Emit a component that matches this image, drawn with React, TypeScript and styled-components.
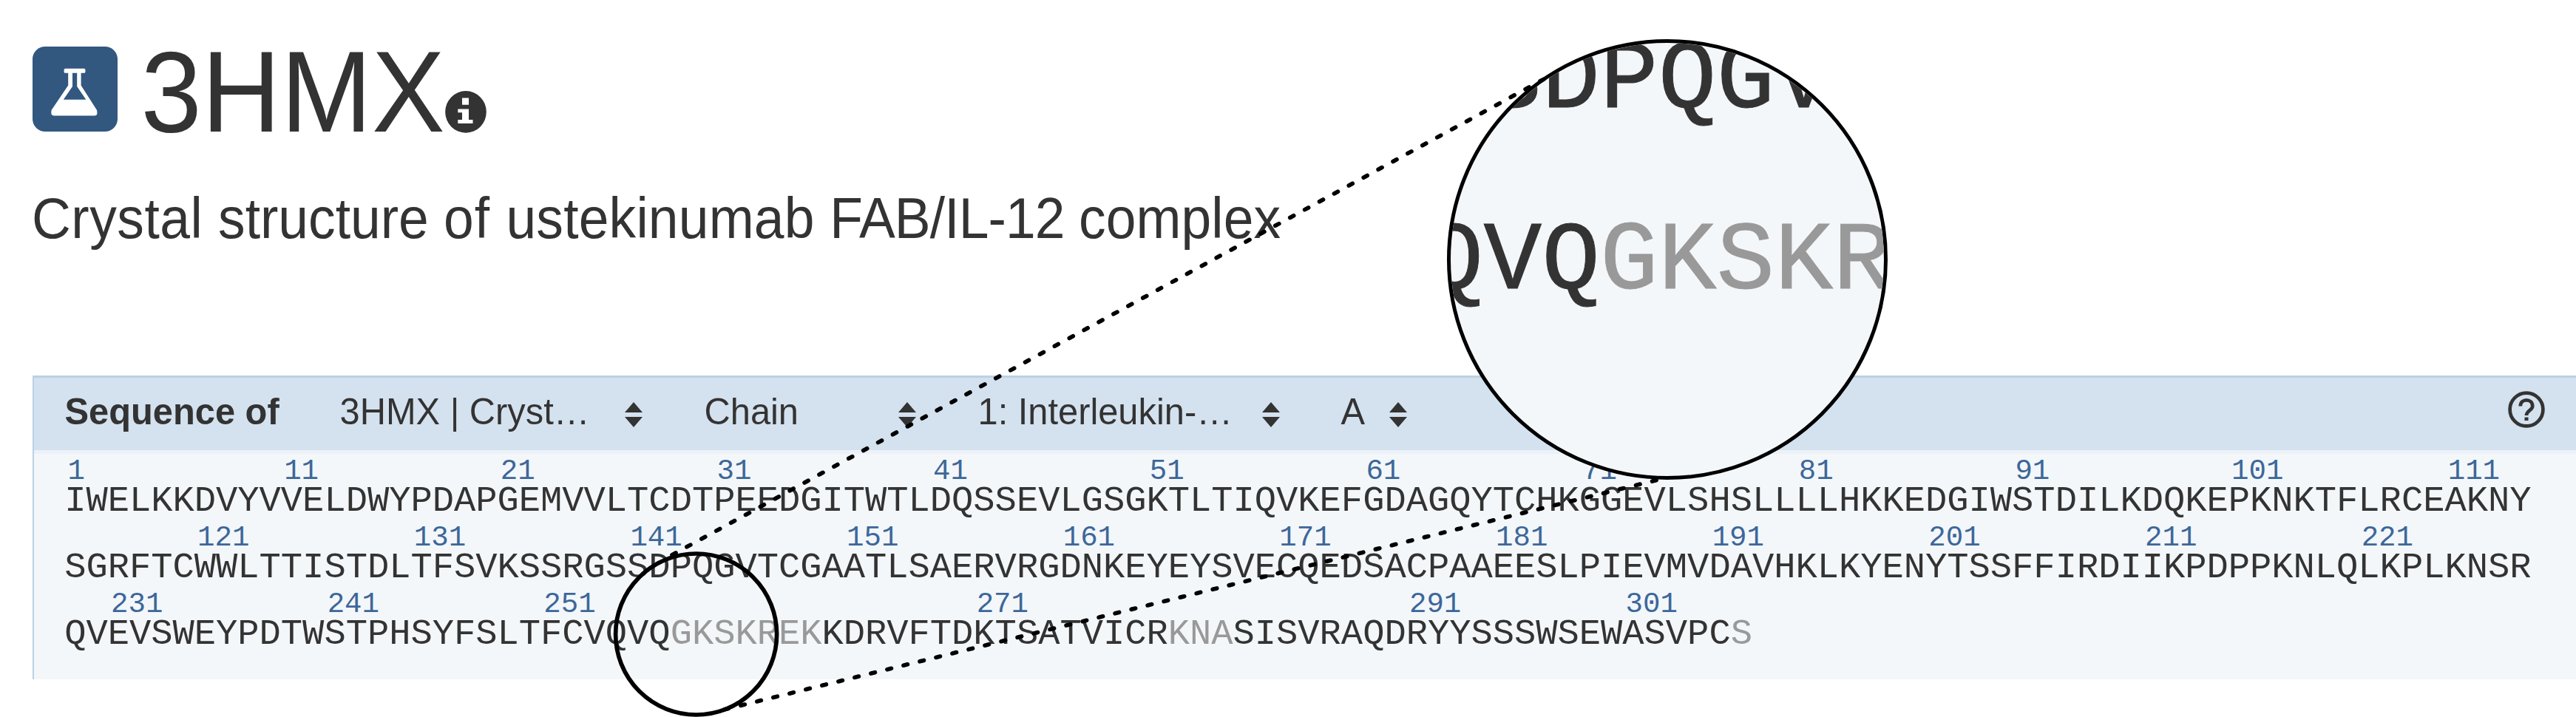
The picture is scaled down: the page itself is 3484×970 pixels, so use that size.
import React from "react";
import styled, { createGlobalStyle } from "styled-components";

const GlobalStyle = createGlobalStyle`
  * { box-sizing: border-box; }
  html, body { margin: 0; padding: 0; background: #fff; }
`;

const Page = styled.main`
  position: relative;
  width: 3484px;
  height: 970px;
  overflow: hidden;
  background: #fff;
  color: #333;
  font-family: "Liberation Sans", Arial, sans-serif;
`;

const TitleRow = styled.header`
  display: flex;
  align-items: flex-start;
  height: 254px;
  padding: 62.5px 0 0 43.5px;
`;

const EntryBadge = styled.span`
  display: flex;
  width: 115px;
  height: 115px;
  border-radius: 17px;
  background: #325880;
`;

const EntryId = styled.h1`
  margin: -17px 0 0 32px;
  font-size: 148px;
  line-height: 162px;
  font-weight: 400;
  transform: scaleY(1.05);
  transform-origin: 0 133px;
`;

const InfoIcon = styled.svg`
  margin: 60px 0 0 0.5px;
`;

const Subtitle = styled.h2`
  margin: 0 0 0 43px;
  height: 254px;
  font-size: 73.2px;
  line-height: 86.6px;
  font-weight: 400;
  white-space: nowrap;
  transform: scaleY(1.06);
  transform-origin: 0 69px;
`;

const Word = styled.span<{ $tracking: number }>`
  letter-spacing: ${(p) => p.$tracking}px;
`;

const Panel = styled.section`
  margin-left: 44px;
  height: 410.7px;
  background: #f3f7fa;
  border-left: 2.5px solid #bbd1e6;
  border-top: 3.5px solid #bbd0e5;
`;

const Toolbar = styled.div`
  display: flex;
  align-items: center;
  height: 98px;
  padding: 0 42px 6px 41.5px;
  background: #d4e1ee;
  box-shadow: 0 5px 0 #ecf1f8;
  font-size: 48.8px;
  white-space: nowrap;
`;

const ToolbarLabel = styled.strong`
  width: 372px;
  font-weight: 700;
  transform: scaleY(1.04);
  transform-origin: 0 80%;
`;

const Picker = styled.span<{ $width: number; $gap?: number }>`
  display: flex;
  align-items: center;
  justify-content: space-between;
  width: ${(p) => p.$width}px;
  margin-right: ${(p) => p.$gap ?? 0}px;
`;

const PickerValue = styled.span`
  transform: scaleY(1.04);
  transform-origin: 0 80%;
`;

const PickerArrows = styled.svg`
  margin-top: 7px;
`;

const HelpIcon = styled.svg`
  margin: 0 0 7px auto;
`;

const Sequence = styled.div`
  padding: 9.5px 0 0 41.2px;
  font-family: "Liberation Mono", "Courier New", monospace;
`;

const SequenceRow = styled.div`
  display: grid;
  grid-template-columns: repeat(114, 29.27px);
  grid-template-rows: 38px 52.2px;
`;

const Marker = styled.span<{ $column: number }>`
  grid-row: 1;
  grid-column: ${(p) => p.$column};
  padding-left: 4.3px;
  color: #3d6799;
  font-size: 39.1px;
  line-height: 38px;
`;

const Residue = styled.span<{ $faded?: boolean }>`
  grid-row: 2;
  color: ${(p) => (p.$faded ? "#999" : "#333")};
  font-size: 48.8px;
  line-height: 43.5px;
`;

const Overlay = styled.svg`
  position: absolute;
  inset: 0;
`;

const Lens = styled.div`
  position: absolute;
  left: 1957px;
  top: 53px;
  width: 596.4px;
  height: 596.4px;
  overflow: hidden;
  border: 5.67px solid #000;
  border-radius: 50%;
  background: #f3f7fa;
  font-family: "Liberation Mono", "Courier New", monospace;
`;

const LensRow = styled.div<{ $indent: number }>`
  display: flex;
  height: 245px;
  margin-left: ${(p) => p.$indent}px;
  font-size: 131.3px;
  line-height: 150px;
`;

const LensText = styled.span<{ $faded?: boolean }>`
  color: ${(p) => (p.$faded ? "#999" : "#333")};
  -webkit-text-stroke: 1px currentColor;
`;

const LensRows = styled.div`
  margin-top: -23px;
`;

const ROWS = [
  {
    start: 1,
    residues:
      "IWELKKDVYVVELDWYPDAPGEMVVLTCDTPEEDGITWTLDQSSEVLGSGKTLTIQVKEFGDAGQYTCHKGGEVLSHSLLLLHKKEDGIWSTDILKDQKEPKNKTFLRCEAKNY",
    faded: [] as number[][],
  },
  {
    start: 115,
    residues:
      "SGRFTCWWLTTISTDLTFSVKSSRGSSDPQGVTCGAATLSAERVRGDNKEYEYSVECQEDSACPAAEESLPIEVMVDAVHKLKYENYTSSFFIRDIIKPDPPKNLQLKPLKNSR",
    faded: [] as number[][],
  },
  {
    start: 229,
    residues:
      "QVEVSWEYPDTWSTPHSYFSLTFCVQVQGKSKREKKDRVFTDKTSATVICRKNASISVRAQDRYYSSSWSEWASVPCS",
    faded: [
      [28, 34],
      [51, 53],
      [77, 77],
    ],
  },
];

function Flask() {
  return (
    <svg width="115" height="115" viewBox="0 0 115 115">
      <path
        fill="#fff"
        fillRule="evenodd"
        d="M44 29.8H70Q71.5 29.8 71.5 32.7Q71.5 35.8 70 35.8H65.6V52.5L87 86Q88.8 93.5 84 93.5H29Q24 93.5 25.6 86L48.2 52.5V35.8H44Q42.5 35.8 42.5 32.7Q42.5 29.8 44 29.8ZM54 35.8V54L41.8 71.8H72.3L60.2 54V35.8Z"
      />
    </svg>
  );
}

function SortArrows() {
  return (
    <PickerArrows width="24" height="34" viewBox="0 0 24 34" fill="#333">
      <path d="M12 0L24 14H0ZM0 20H24L12 34Z" />
    </PickerArrows>
  );
}

function SequenceLine({ start, residues, faded }: (typeof ROWS)[number]) {
  const isFaded = (i: number) => faded.some(([a, b]) => i >= a && i <= b);
  const letters = residues.split("");
  return (
    <SequenceRow>
      {letters.map((letter, i) => (
        <React.Fragment key={i}>
          {(start + i) % 10 === 1 && !isFaded(i) && (
            <Marker $column={i + 1}>{start + i}</Marker>
          )}
          <Residue $faded={isFaded(i)}>{letter}</Residue>
        </React.Fragment>
      ))}
    </SequenceRow>
  );
}

export default function App() {
  return (
    <>
      <GlobalStyle />
      <Page>
        <TitleRow>
          <EntryBadge>
            <Flask />
          </EntryBadge>
          <EntryId>3HMX</EntryId>
          <InfoIcon width="56" height="57" viewBox="0 0 56 57">
            <ellipse cx="28" cy="28.4" rx="27.8" ry="28.3" fill="#333" />
            <path
              fill="#fff"
              d="M23 9.5H32V18.7H23ZM17.3 24.6H32V39H37.5V44H17.3V39H23V29.2H17.3Z"
            />
          </InfoIcon>
        </TitleRow>
        <Subtitle>
          <Word $tracking={0.5}>Crystal </Word>
          <Word $tracking={0}>structure </Word>
          <Word $tracking={1}>of </Word>
          <Word $tracking={0.2}>ustekinumab </Word>
          <Word $tracking={-0.9}>FAB/IL-12 </Word>
          <Word $tracking={0.1}>complex</Word>
        </Subtitle>
        <Panel>
          <Toolbar>
            <ToolbarLabel>Sequence of</ToolbarLabel>
            <Picker $width={409} $gap={84}>
              <PickerValue>3HMX | Cryst…</PickerValue>
              <SortArrows />
            </Picker>
            <Picker $width={286} $gap={84}>
              <PickerValue>Chain</PickerValue>
              <SortArrows />
            </Picker>
            <Picker $width={408} $gap={83}>
              <PickerValue>1: Interleukin-…</PickerValue>
              <SortArrows />
            </Picker>
            <Picker $width={89}>
              <PickerValue>A</PickerValue>
              <SortArrows />
            </Picker>
            <HelpIcon width="50" height="50" viewBox="0 0 50 50" fill="none" stroke="#333">
              <circle cx="25" cy="25" r="22.4" strokeWidth="4.7" />
              <path d="M16.8 20.5C16.8 9.6 33.2 9.6 33.2 20.5C33.2 26 25 26.5 25 33" strokeWidth="4.7" />
              <path d="M25 35.5V40" strokeWidth="5" />
            </HelpIcon>
          </Toolbar>
          <Sequence>
            {ROWS.map((row) => (
              <SequenceLine key={row.start} {...row} />
            ))}
          </Sequence>
        </Panel>
        <Lens>
          <LensRows>
            <LensRow $indent={44.4}>
              <LensText>SDPQGV</LensText>
            </LensRow>
            <LensRow $indent={-34.4}>
              <LensText>QVQ</LensText>
              <LensText $faded>GKSKR</LensText>
            </LensRow>
          </LensRows>
        </Lens>
        <Overlay width="3484" height="970" fill="none" stroke="#000" strokeWidth="5.67">
          <circle cx="941.6" cy="858" r="109" />
          <g strokeLinecap="round" strokeDasharray="5.67 17">
            <path d="M909 750.7L2088 107.1" />
            <path d="M979.8 959.8L2240.4 649.6" />
          </g>
        </Overlay>
      </Page>
    </>
  );
}
